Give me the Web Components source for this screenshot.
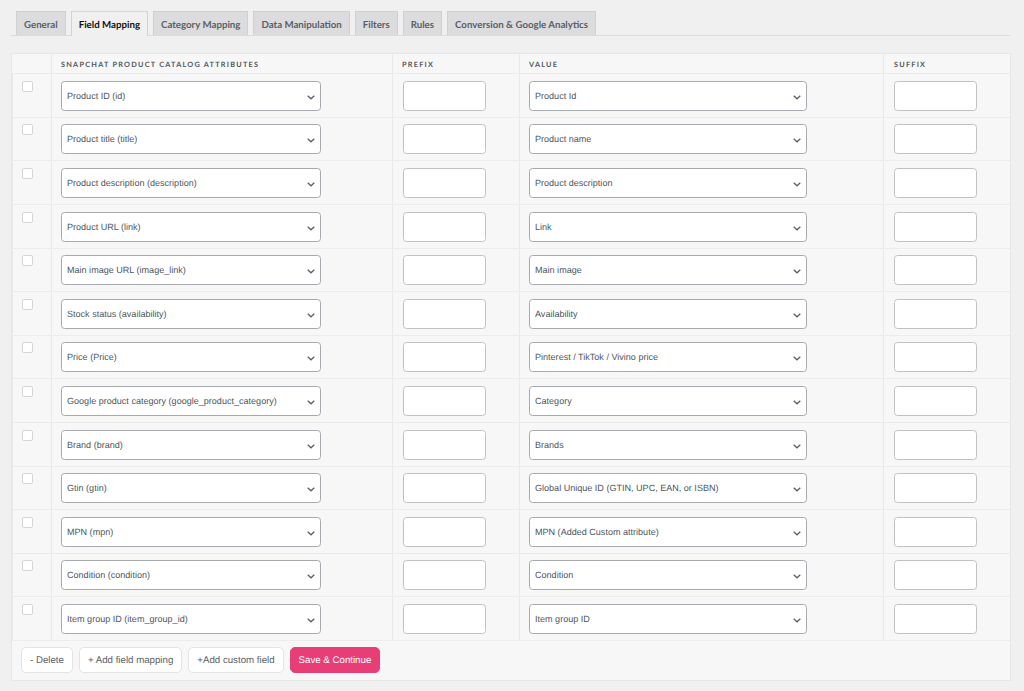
<!doctype html>
<html>
<head>
<meta charset="utf-8">
<title>Field Mapping</title>
<style>
  html, body { margin: 0; background: #f0f0f0; }
  body { font-family: "Liberation Sans", Arial, sans-serif; width: 1024px; height: 691px; overflow: hidden; text-rendering: geometricPrecision; }
  .page { display: block; padding: 11px 13px 0 11px; }
</style>
</head>
<body>
<div class="page">
  <tab-bar>
    <tab-item>General</tab-item>
    <tab-item active>Field Mapping</tab-item>
    <tab-item>Category Mapping</tab-item>
    <tab-item>Data Manipulation</tab-item>
    <tab-item>Filters</tab-item>
    <tab-item>Rules</tab-item>
    <tab-item>Conversion &amp; Google Analytics</tab-item>
  </tab-bar>
  <mapping-table>
    <mapping-row attr="Product ID (id)" value="Product Id"></mapping-row>
    <mapping-row attr="Product title (title)" value="Product name"></mapping-row>
    <mapping-row attr="Product description (description)" value="Product description"></mapping-row>
    <mapping-row attr="Product URL (link)" value="Link"></mapping-row>
    <mapping-row attr="Main image URL (image_link)" value="Main image"></mapping-row>
    <mapping-row attr="Stock status (availability)" value="Availability"></mapping-row>
    <mapping-row attr="Price (Price)" value="Pinterest / TikTok / Vivino price"></mapping-row>
    <mapping-row attr="Google product category (google_product_category)" value="Category"></mapping-row>
    <mapping-row attr="Brand (brand)" value="Brands"></mapping-row>
    <mapping-row attr="Gtin (gtin)" value="Global Unique ID (GTIN, UPC, EAN, or ISBN)"></mapping-row>
    <mapping-row attr="MPN (mpn)" value="MPN (Added Custom attribute)"></mapping-row>
    <mapping-row attr="Condition (condition)" value="Condition"></mapping-row>
    <mapping-row attr="Item group ID (item_group_id)" value="Item group ID"></mapping-row>
    <div slot="footer">
      <action-button>- Delete</action-button>
      <action-button>+ Add field mapping</action-button>
      <action-button>+Add custom field</action-button>
      <action-button primary>Save &amp; Continue</action-button>
    </div>
  </mapping-table>
</div>

<script>
function shadow(el, html) {
  el.attachShadow({ mode: 'open' }).innerHTML = html
}

customElements.define('tab-bar', class extends HTMLElement {
  constructor() {
    super()
    shadow(this, `
      <style>
        :host { display: flex; gap: 5px; padding-left: 5px; height: 24px; width: 994px; border-bottom: 1px solid #dcdcdc; margin-bottom: 17px; }
      </style>
      <slot></slot>
    `)
  }
})

customElements.define('tab-item', class extends HTMLElement {
  constructor() {
    super()
    shadow(this, `
      <style>
        :host {
          display: block; box-sizing: border-box; height: 24px; padding: 0 7px;
          font: 700 9.7px/26px Lato, sans-serif; color: #5a6066;
          background: #dcdcde; border: 1px solid #cfd0d2; border-bottom: 0;
        }
        :host([active]) { background: #f0f0f0; color: #111; height: 25px; border-color: #d4d4d6; }
      </style>
      <slot></slot>
    `)
  }
})

customElements.define('mapping-table', class extends HTMLElement {
  constructor() {
    super()
    shadow(this, `
      <style>
        :host { display: block; width: 1000px; box-sizing: border-box; background: #f7f7f7; border: 1px solid #e6e6e6; }
        .head { display: grid; grid-template-columns: 39px 341px 127px 364px 1fr; height: 19.3px; border-bottom: 1px solid #ececec; }
        .head div { border-left: 1px solid #e9e9e9; padding-left: 9px; font: 700 7.3px/22px Lato, sans-serif; letter-spacing: 1.25px; color: #50575e; text-transform: uppercase; overflow: hidden; }
        .head div:first-child { border-left: 0; }
        .head div:last-child { padding-left: 10px; }
        ::slotted([slot=footer]) { display: flex; gap: 6px; padding: 6.2px 9px 0; height: 32.8px; }
      </style>
      <div class="head">
        <div></div>
        <div>Snapchat product catalog attributes</div>
        <div>Prefix</div>
        <div>Value</div>
        <div>Suffix</div>
      </div>
      <slot></slot>
      <slot name="footer"></slot>
    `)
  }
})

customElements.define('mapping-row', class extends HTMLElement {
  constructor() {
    super()
    shadow(this, `
      <style>
        :host { display: grid; grid-template-columns: 39px 341px 127px 364px 1fr; height: 43.6px; box-sizing: border-box; border-bottom: 1px solid #ececec; }
        .cell { border-left: 1px solid #e9e9e9; padding: 6.5px 0 0 9px; }
        .cell:first-child { border-left: 0; }
        .cell.input { padding-left: 10px; }
        .check { display: block; box-sizing: border-box; width: 11px; height: 11px; background: #fff; border: 1px solid #d4d5d8; border-radius: 2px; }
      </style>
      <div class="cell"><span class="check"></span></div>
      <div class="cell"><select-box width="260">${this.getAttribute('attr')}</select-box></div>
      <div class="cell input"><text-box></text-box></div>
      <div class="cell"><select-box width="278">${this.getAttribute('value')}</select-box></div>
      <div class="cell input"><text-box></text-box></div>
    `)
  }
})

customElements.define('select-box', class extends HTMLElement {
  constructor() {
    super()
    shadow(this, `
      <style>
        :host {
          display: flex; align-items: center; justify-content: space-between; box-sizing: border-box;
          height: 30px; padding: 0 5.5px 0 5px; background: #fff; border: 1px solid #a6aaaf; border-radius: 3.5px;
          font: 9.05px "Liberation Sans", Arial, sans-serif; color: #50565c;
        }
        svg { margin-top: 3px; }
      </style>
      <slot></slot>
      <svg width="8" height="5" viewBox="0 0 8 5"><path d="M.7.8l3.3 3 3.3-3" fill="none" stroke="#5a6066" stroke-width="1.3"/></svg>
    `)
    this.style.width = this.getAttribute('width') + 'px'
  }
})

customElements.define('text-box', class extends HTMLElement {
  constructor() {
    super()
    shadow(this, `
      <style>
        :host { display: block; box-sizing: border-box; width: 83px; height: 30px; background: #fff; border: 1px solid #bfc2c5; border-radius: 3.5px; }
      </style>
    `)
  }
})

customElements.define('action-button', class extends HTMLElement {
  constructor() {
    super()
    shadow(this, `
      <style>
        :host {
          display: block; box-sizing: border-box; height: 26px; padding: 0 8px; background: #fff;
          border: 1px solid #e4e4e6; border-radius: 5px;
          font: 9.7px/25px "Liberation Sans", Arial, sans-serif; color: #5a6066;
        }
        :host([primary]) { background: #e83e78; border-color: #e83e78; color: #fff; }
      </style>
      <slot></slot>
    `)
  }
})
</script>
</body>
</html>
